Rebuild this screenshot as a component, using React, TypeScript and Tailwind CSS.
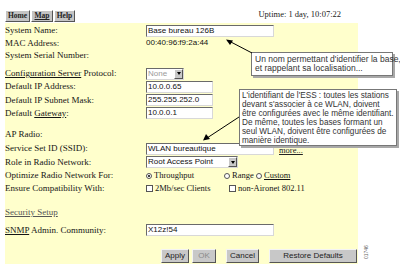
import React from 'react';

const serif = { fontFamily: '"Liberation Serif", "Times New Roman", serif' };
const sans = { fontFamily: '"Liberation Sans", Arial, sans-serif' };

const inputCls =
  'h-[12px] bg-white border border-t-[#6a6a6a] border-l-[#6a6a6a] border-b-[#d8d8d8] border-r-[#d8d8d8] text-[8px] leading-[10px] px-[1px] text-[#111] flex items-center';

function Field({ value, w }: { value: string; w: string }) {
  return (
    <div className={`${inputCls} ${w}`} style={sans}>
      {value}
    </div>
  );
}

function Select({ value, w, disabled }: { value: string; w: string; disabled?: boolean }) {
  return (
    <div className={`${inputCls} ${w} justify-between pr-0`} style={sans}>
      <span className={disabled ? 'text-[#9a9a9a]' : ''}>{value}</span>
      <span className="w-[9px] h-[10px] bg-[#c8c8c8] border border-t-white border-l-white border-b-[#555] border-r-[#555] flex items-center justify-center">
        <span className="w-0 h-0 border-l-[2.5px] border-r-[2.5px] border-t-[3px] border-l-transparent border-r-transparent border-t-black" />
      </span>
    </div>
  );
}

function Row({ label, h, mt, children }: { label: React.ReactNode; h: string; mt?: string; children?: React.ReactNode }) {
  return (
    <div className={`flex items-center ${h} ${mt ?? ''}`}>
      <div className="w-[141px] text-[9px] leading-[11px] text-[#151515] whitespace-nowrap" style={serif}>
        {label}
      </div>
      <div className="flex items-center">{children}</div>
    </div>
  );
}

function Radio({ on }: { on?: boolean }) {
  return (
    <span className="w-[6px] h-[6px] rounded-full border border-[#555] bg-white flex items-center justify-center mr-[2px]">
      {on && <span className="w-[2px] h-[2px] rounded-full bg-black" />}
    </span>
  );
}

function Check() {
  return <span className="w-[7px] h-[7px] border border-[#555] bg-white mr-[2px]" />;
}

function NavBtn({ label, w, u }: { label: string; w: string; u?: boolean }) {
  return (
    <div
      className={`${w} h-[12px] bg-[#c4c4c4] border border-t-white border-l-white border-b-[#555] border-r-[#555] text-[7.5px] font-bold flex items-center justify-center text-[#222] ${u ? 'underline' : ''}`}
      style={serif}
    >
      {label}
    </div>
  );
}

function Btn({ label, w, disabled }: { label: string; w: string; disabled?: boolean }) {
  return (
    <div
      className={`${w} h-[14px] bg-[#c8c8c8] border border-t-[#f4f4f4] border-l-[#f4f4f4] border-b-[#555] border-r-[#555] text-[8px] flex items-center justify-center ${disabled ? 'text-[#8a8a8a]' : 'text-[#222]'}`}
      style={sans}
    >
      {label}
    </div>
  );
}

export default function App() {
  return (
    <div className="relative w-[400px] h-[268px] bg-white overflow-hidden">
      <div className="flex items-start justify-between h-[23px] pl-[5px] pr-[59px] pt-[10px]">
        <div className="flex gap-[1px]">
          <NavBtn label="Home" w="w-[25px]" />
          <NavBtn label="Map" w="w-[22px]" u />
          <NavBtn label="Help" w="w-[21px]" />
        </div>
        <div className="text-[8.5px] leading-[10px] text-[#222] -mt-[1px]" style={serif}>
          Uptime: 1 day, 10:07:22
        </div>
      </div>

      <div className="ml-[5px] w-[353px] h-[241px] bg-[#ffffcc] flex flex-col pt-[1px]">
        <Row label="System Name:" h="h-[13px]">
          <Field value="Base bureau 126B" w="w-[128px]" />
        </Row>
        <Row label="MAC Address:" h="h-[12px]">
          <span className="text-[8px] text-[#111]" style={sans}>00:40:96:f9:2a:44</span>
        </Row>
        <Row label="System Serial Number:" h="h-[12px]" />

        <Row label={<><span className="underline">Configuration Server</span> Protocol:</>} h="h-[13px]" mt="mt-[6px]">
          <Select value="None" w="w-[38px]" disabled />
        </Row>
        <Row label="Default IP Address:" h="h-[13px]">
          <Field value="10.0.0.65" w="w-[67px]" />
        </Row>
        <Row label="Default IP Subnet Mask:" h="h-[14px]">
          <Field value="255.255.252.0" w="w-[67px]" />
        </Row>
        <Row label={<>Default <span className="underline">Gateway</span>:</>} h="h-[12px]">
          <Field value="10.0.0.1" w="w-[67px]" />
        </Row>

        <Row label="AP Radio:" h="h-[12px]" mt="mt-[9px]" />
        <Row label="Service Set ID (SSID):" h="h-[13px]" mt="mt-[2px]">
          <Field value="WLAN bureautique" w="w-[128px]" />
          <span className="ml-[5px] mt-[3px] text-[8.5px] leading-[9px] underline text-[#222]" style={serif}>more...</span>
        </Row>
        <Row label="Role in Radio Network:" h="h-[14px]">
          <Select value="Root Access Point" w="w-[92px]" />
        </Row>
        <Row label="Optimize Radio Network For:" h="h-[13px]">
          <div className="flex items-center text-[8.5px] text-[#151515]" style={serif}>
            <Radio on />
            <span className="w-[70px]">Throughput</span>
            <Radio />
            <span className="w-[24px]">Range</span>
            <Radio />
            <span className="underline">Custom</span>
          </div>
        </Row>
        <Row label="Ensure Compatibility With:" h="h-[13px]">
          <div className="flex items-center text-[8.5px] text-[#151515]" style={serif}>
            <Check />
            <span className="w-[74px]">2Mb/sec Clients</span>
            <Check />
            <span>non-Aironet 802.11</span>
          </div>
        </Row>

        <div className="h-[12px] mt-[12px] flex items-center text-[9px] underline text-[#555]" style={serif}>
          Security Setup
        </div>
        <Row label={<><span className="underline">SNMP</span> Admin. Community:</>} h="h-[14px]" mt="mt-[4px]">
          <Field value="X12z!54" w="w-[128px]" />
        </Row>

        <div className="flex justify-end gap-[3px] mt-[12px] pr-[1px]">
          <Btn label="Apply" w="w-[28px]" />
          <Btn label="OK" w="w-[24px]" disabled />
          <span className="w-[4px]" />
          <Btn label="Cancel" w="w-[33px]" />
          <span className="w-[4px]" />
          <Btn label="Restore Defaults" w="w-[88px]" />
        </div>
      </div>

      <div
        className="absolute left-[363px] top-[259px] text-[5px] leading-[6px] text-[#666] -rotate-90 origin-top-left"
        style={sans}
      >
        01746
      </div>

      <div
        className="absolute left-[251px] top-[52px] w-[142px] h-[24px] bg-white border border-[#777] shadow-[2px_2px_0_#a8a8a8] px-[3px] pt-[2px] text-[8.5px] leading-[9px] text-[#333] whitespace-nowrap"
        style={sans}
      >
        Un nom permettant d'identifier la base,
        <br />
        et rappelant sa localisation...
      </div>

      <div
        className="absolute left-[239px] top-[89px] w-[158px] h-[57px] bg-white border border-[#777] shadow-[2px_2px_0_#a8a8a8] pl-[2px] pt-[1px] text-[8.2px] leading-[9px] text-[#333] whitespace-nowrap"
        style={sans}
      >
        L'identifiant de l'ESS : toutes les stations
        <br />
        devant s'associer à ce WLAN, doivent
        <br />
        être configurées avec le même identifiant.
        <br />
        De même, toutes les bases formant un
        <br />
        seul WLAN, doivent être configurées de
        <br />
        manière identique.
      </div>

      <svg className="absolute left-0 top-0 pointer-events-none" width="400" height="268">
        <line x1="252" y1="53" x2="229" y2="41" stroke="#000" strokeWidth="1" />
        <polygon points="226,39.5 233,40.5 230,45" fill="#000" />
        <line x1="239" y1="117" x2="207" y2="138" stroke="#000" strokeWidth="1" />
        <polygon points="203,140.5 206,134 210,139" fill="#000" />
      </svg>
    </div>
  );
}
